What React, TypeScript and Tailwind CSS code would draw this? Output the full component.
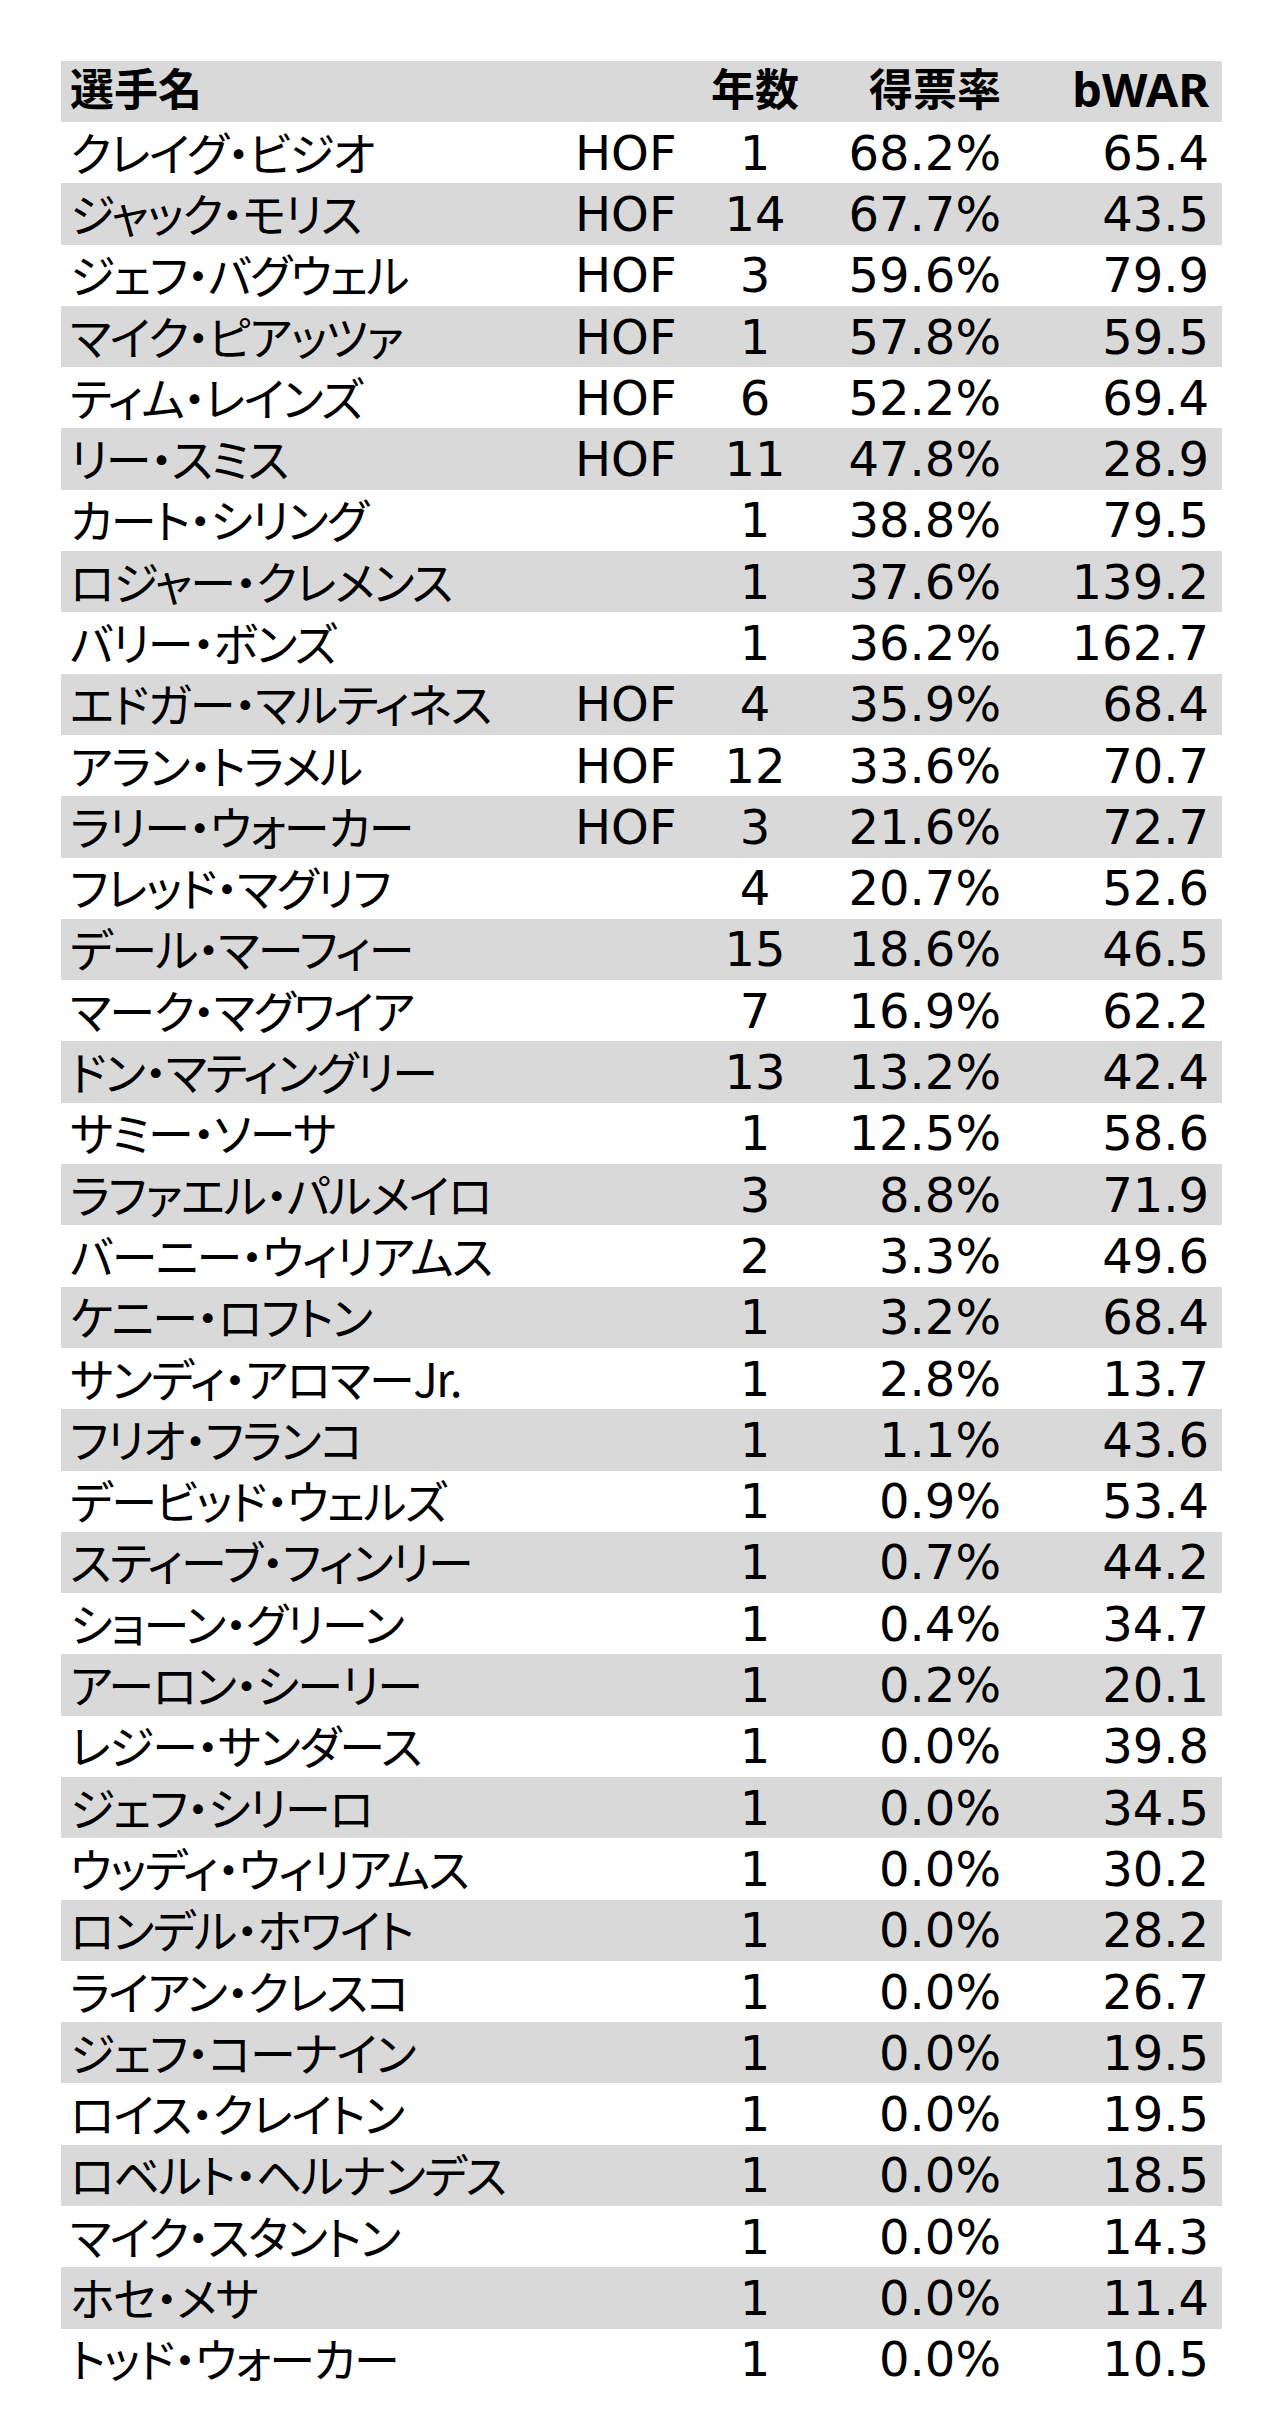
import React from "react";

type Row = [string, string, string, string, string];

const rows: Row[] = [
  ["クレイグ・ビジオ", "HOF", "1", "68.2%", "65.4"],
  ["ジャック・モリス", "HOF", "14", "67.7%", "43.5"],
  ["ジェフ・バグウェル", "HOF", "3", "59.6%", "79.9"],
  ["マイク・ピアッツァ", "HOF", "1", "57.8%", "59.5"],
  ["ティム・レインズ", "HOF", "6", "52.2%", "69.4"],
  ["リー・スミス", "HOF", "11", "47.8%", "28.9"],
  ["カート・シリング", "", "1", "38.8%", "79.5"],
  ["ロジャー・クレメンス", "", "1", "37.6%", "139.2"],
  ["バリー・ボンズ", "", "1", "36.2%", "162.7"],
  ["エドガー・マルティネス", "HOF", "4", "35.9%", "68.4"],
  ["アラン・トラメル", "HOF", "12", "33.6%", "70.7"],
  ["ラリー・ウォーカー", "HOF", "3", "21.6%", "72.7"],
  ["フレッド・マグリフ", "", "4", "20.7%", "52.6"],
  ["デール・マーフィー", "", "15", "18.6%", "46.5"],
  ["マーク・マグワイア", "", "7", "16.9%", "62.2"],
  ["ドン・マティングリー", "", "13", "13.2%", "42.4"],
  ["サミー・ソーサ", "", "1", "12.5%", "58.6"],
  ["ラファエル・パルメイロ", "", "3", "8.8%", "71.9"],
  ["バーニー・ウィリアムス", "", "2", "3.3%", "49.6"],
  ["ケニー・ロフトン", "", "1", "3.2%", "68.4"],
  ["サンディ・アロマーJr.", "", "1", "2.8%", "13.7"],
  ["フリオ・フランコ", "", "1", "1.1%", "43.6"],
  ["デービッド・ウェルズ", "", "1", "0.9%", "53.4"],
  ["スティーブ・フィンリー", "", "1", "0.7%", "44.2"],
  ["ショーン・グリーン", "", "1", "0.4%", "34.7"],
  ["アーロン・シーリー", "", "1", "0.2%", "20.1"],
  ["レジー・サンダース", "", "1", "0.0%", "39.8"],
  ["ジェフ・シリーロ", "", "1", "0.0%", "34.5"],
  ["ウッディ・ウィリアムス", "", "1", "0.0%", "30.2"],
  ["ロンデル・ホワイト", "", "1", "0.0%", "28.2"],
  ["ライアン・クレスコ", "", "1", "0.0%", "26.7"],
  ["ジェフ・コーナイン", "", "1", "0.0%", "19.5"],
  ["ロイス・クレイトン", "", "1", "0.0%", "19.5"],
  ["ロベルト・ヘルナンデス", "", "1", "0.0%", "18.5"],
  ["マイク・スタントン", "", "1", "0.0%", "14.3"],
  ["ホセ・メサ", "", "1", "0.0%", "11.4"],
  ["トッド・ウォーカー", "", "1", "0.0%", "10.5"],
];

const grid =
  "grid grid-cols-[509px_130px_110px_191px_208px] h-[61.3px] items-center pr-[13px]";

const jp = "font-['Noto_Sans_CJK_JP','Noto_Sans',sans-serif] [font-feature-settings:'palt']";
const num = "font-['DejaVu_Sans','Noto_Sans_CJK_JP',sans-serif] text-[48px]";
const head = "font-['Noto_Sans','Noto_Sans_CJK_JP',sans-serif] font-bold text-[44px] pb-[4px]";

export default function App() {
  return (
    <div className="w-[1280px] h-[2425px] bg-white text-black pt-[60.7px] pl-[61px] text-[46px] leading-none">
      <div className="w-[1161px] flex flex-col">
        <div className={`${grid} bg-[#d9d9d9]`}>
          <div className={`pl-[9px] ${head}`}>選手名</div>
          <div></div>
          <div className={`text-center ${head}`}>年数</div>
          <div className={`text-right ${head}`}>得票率</div>
          <div className={`text-right ${head} text-[47px] pb-[2px]`}>bWAR</div>
        </div>
        {rows.map((r, i) => (
          <div
            key={i}
            className={`${grid} ${i % 2 === 1 ? "bg-[#d9d9d9]" : "bg-white"}`}
          >
            <div className={`pl-[9px] pb-[4px] whitespace-nowrap tracking-[-1.5px] ${jp}`}>{r[0]}</div>
            <div className={`pl-[5px] ${num}`}>{r[1]}</div>
            <div className={`text-center ${num}`}>{r[2]}</div>
            <div className={`text-right ${num}`}>{r[3]}</div>
            <div className={`text-right ${num}`}>{r[4]}</div>
          </div>
        ))}
      </div>
    </div>
  );
}
